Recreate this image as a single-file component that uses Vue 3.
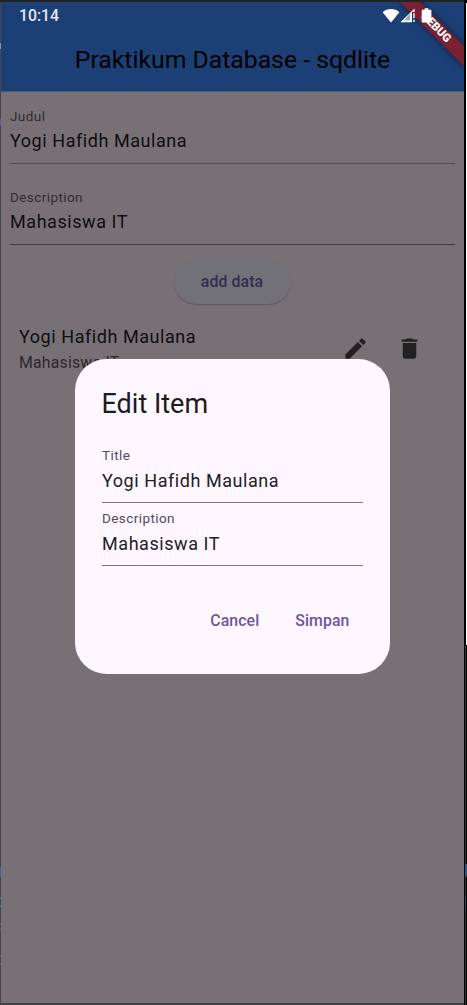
<script setup>
const fields = [
  { label: 'Judul', value: 'Yogi Hafidh Maulana' },
  { label: 'Description', value: 'Mahasiswa IT' },
]
const dialogFields = [
  { label: 'Title', value: 'Yogi Hafidh Maulana' },
  { label: 'Description', value: 'Mahasiswa IT' },
]
</script>

<template>
  <div class="frame">
    <div class="screen">
      <header class="appbar">
        <div class="status">
          <span class="clock">10:14</span>
          <svg class="status-icons" width="52" height="18" viewBox="0 0 52 18">
            <path d="M0.6 5.2C5.2 0.9 12.8 0.9 17.4 5.2L9 15.4Z" fill="#fff" />
            <path d="M32.6 1.6V5H30V15.2H18.4Z" fill="#fff" />
            <path d="M28.2 6.2V13.6H22.2Z" fill="#1c3f75" opacity="0.45" />
            <path d="M31.2 6.2h1.6v5h-1.6zM31.2 12.8h1.6v2.2h-1.6z" fill="#dfe4ee" />
            <path d="M42.6 1.2h3.8v1.6h2.3q.7 0 .7.7v11.2q0 .8-.8.8h-8.1q-.8 0-.8-.8V3.5q0-.7.7-.7h2.2z" fill="#fff" />
          </svg>
        </div>
        <h1 class="title">Praktikum Database - sqdlite</h1>
      </header>

      <main class="body">
        <div v-for="f in fields" :key="f.label" class="field page-field">
          <span class="label">{{ f.label }}</span>
          <span class="value">{{ f.value }}</span>
        </div>
        <button class="add">add data</button>
        <div class="item">
          <div class="item-text">
            <span class="item-title">Yogi Hafidh Maulana</span>
            <span class="item-sub">Mahasiswa IT</span>
          </div>
          <svg class="icon" viewBox="0 0 24 24"><path d="M3 17.25V21h3.75L17.81 9.94l-3.75-3.75L3 17.25zM20.71 7.04a1 1 0 0 0 0-1.41l-2.34-2.34a1 1 0 0 0-1.41 0l-1.83 1.83 3.75 3.75 1.83-1.83z" /></svg>
          <svg class="icon" viewBox="0 0 24 24"><path d="M6 19c0 1.1.9 2 2 2h8c1.1 0 2-.9 2-2V7H6v12zM19 4h-3.5l-1-1h-5l-1 1H5v2h14V4z" /></svg>
        </div>
      </main>

      <div class="ribbon"><span>DEBUG</span></div>

      <section class="dialog">
        <h2 class="dialog-title">Edit Item</h2>
        <div v-for="f in dialogFields" :key="f.label" class="field dialog-field">
          <span class="label">{{ f.label }}</span>
          <span class="value">{{ f.value }}</span>
        </div>
        <div class="actions">
          <button>Cancel</button>
          <button>Simpan</button>
        </div>
      </section>
    </div>
  </div>
</template>

<style>
body { margin: 0; background: #000; }
</style>

<style scoped>
.frame {
  box-sizing: border-box;
  width: 467px;
  height: 1005px;
  padding: 2px 3px 2px 1px;
  overflow: hidden;
  font-family: Roboto, sans-serif;
  background:
    linear-gradient(#fff, #fff) 466px 3px / 1px 642px no-repeat,
    linear-gradient(#2c5380, #2c5380) 465px 864px / 2px 13px no-repeat,
    linear-gradient(#2c5380, #2c5380) 465px 897px / 1px 10px no-repeat,
    linear-gradient(#37373b, #37373b) 465px 646px / 1px 359px no-repeat,
    linear-gradient(#232323, #232323) 0 0 / 464px 2px no-repeat,
    linear-gradient(#424044, #424044) 0 1003px / 464px 2px no-repeat,
    linear-gradient(#7d9aa5, #7d9aa5) 0 43px / 1px 6px no-repeat,
    linear-gradient(#6650a0, #6650a0) 0 119px / 1px 7px no-repeat,
    linear-gradient(#3c6496, #3c6496) 0 867px / 1px 10px no-repeat,
    linear-gradient(#3c6496, #3c6496) 0 897px / 1px 2px no-repeat,
    linear-gradient(#3c6496, #3c6496) 0 905px / 1px 2px no-repeat,
    linear-gradient(#3c6496, #3c6496) 0 923px / 1px 2px no-repeat,
    linear-gradient(#3c6496, #3c6496) 0 928px / 1px 2px no-repeat,
    linear-gradient(#3c6496, #3c6496) 0 955px / 1px 2px no-repeat,
    linear-gradient(#3c6496, #3c6496) 0 963px / 1px 2px no-repeat,
    linear-gradient(#47474b, #47474b) 0 0 / 1px 1005px no-repeat,
    #000;
}
.screen {
  position: relative;
  width: 463px;
  height: 1001px;
  overflow: hidden;
  background: #777175;
}
.appbar {
  height: 90px;
  background: linear-gradient(#1c3f75 89px, #4a5877 89px);
  box-sizing: border-box;
}
.status {
  display: flex;
  justify-content: space-between;
  height: 27px;
  padding: 0 30px 0 18px;
}
.clock {
  color: #e4e8f0;
  font-size: 15.8px;
  font-weight: 500;
  line-height: 27px;
}
.status-icons {
  position: relative;
  z-index: 3;
  margin-top: 5px;
}
.title {
  margin: 0;
  color: #000;
  font-size: 24.75px;
  font-weight: 400;
  line-height: 62px;
  text-align: center;
  white-space: nowrap;
}
.body {
  display: flex;
  flex-direction: column;
  padding: 9px 9px 0;
}
.field {
  display: flex;
  flex-direction: column;
  box-sizing: border-box;
}
.label {
  font-size: 13.5px;
  line-height: 18px;
  letter-spacing: 0.42px;
}
.value {
  margin-top: 2px;
  font-size: 18px;
  line-height: 27px;
  letter-spacing: 0.56px;
}
.page-field {
  height: 63px;
  padding-top: 6px;
  margin-bottom: 18px;
  border-bottom: 1px solid #3f3a40;
}
.page-field:first-child { border-bottom-color: #504c51; }
.page-field .label { color: #312e32; }
.page-field .value { color: #0f0e11; }
button {
  border: 0;
  background: none;
  font: 500 15.8px/24px Roboto, sans-serif;
  letter-spacing: 0.11px;
}
.add {
  align-self: center;
  width: 117px;
  height: 45px;
  margin: -4px 1px 0 0;
  border-radius: 23px;
  background: #727177;
  color: #352b55;
  box-shadow: 0 1px 1px rgba(0, 0, 0, 0.2);
}
.item {
  display: flex;
  align-items: flex-start;
  padding: 19px 32px 0 9px;
}
.item-text {
  display: flex;
  flex: 1;
  flex-direction: column;
}
.item-title {
  color: #0f0e11;
  font-size: 18px;
  line-height: 27px;
  letter-spacing: 0.56px;
}
.item-sub {
  margin-top: 1px;
  color: #2c292d;
  font-size: 15.8px;
  line-height: 23px;
  letter-spacing: 0.22px;
}
.icon {
  width: 27px;
  height: 27px;
  margin: 12px 0 0 27px;
  fill: #212121;
}
.ribbon {
  position: absolute;
  z-index: 1;
  top: 20px;
  left: 391px;
  width: 90px;
  height: 13.5px;
  background: #7c1f30;
  box-shadow: 0 0 7px rgba(0, 0, 0, 0.5);
  box-sizing: border-box;
  padding-right: 3px;
  color: #fff;
  font-size: 11.5px;
  font-weight: 900;
  line-height: 13.5px;
  text-align: center;
  transform: rotate(45deg);
}
.dialog {
  position: absolute;
  z-index: 2;
  top: 357px;
  left: 73.5px;
  box-sizing: border-box;
  width: 315px;
  height: 315px;
  padding: 27px;
  border-radius: 31.5px;
  background: #fef7ff;
}
.dialog-title {
  margin: 0 0 18px;
  color: #1d1b20;
  font-size: 27px;
  font-weight: 400;
  line-height: 36px;
}
.dialog-field {
  height: 63px;
  padding-top: 6px;
  border-bottom: 1px solid #79747e;
}
.dialog-field .label { padding-left: 0.5px; color: #514d57; }
.dialog-field .value { margin-top: 3px; padding-left: 0.5px; color: #222025; }
.actions {
  display: flex;
  justify-content: flex-end;
  gap: 9px;
  margin: 43px -0.5px 0 0;
}
.actions button {
  padding: 0 13.5px;
  color: #6b569f;
}
</style>
